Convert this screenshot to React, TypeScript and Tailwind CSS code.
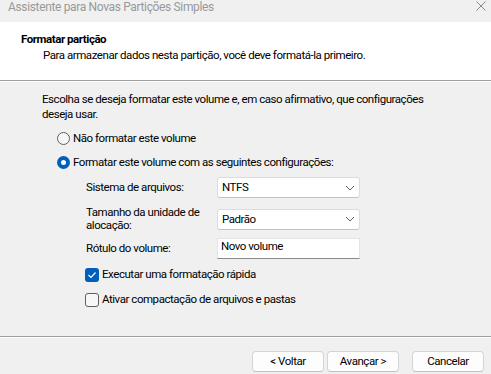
import type { ReactNode } from "react";

function Chevron() {
  return (
    <svg width="10" height="6" viewBox="0 0 10 6" className="mr-[4px]">
      <path d="M1 1 L5 5 L9 1" fill="none" stroke="#616161" strokeWidth="1" />
    </svg>
  );
}

function Combo({ value }: { value: string }) {
  return (
    <div className="flex h-[21px] w-[143px] items-center justify-between rounded-[3px] border border-[#dcdcdc] border-b-[#c4c4c4] bg-white pl-[4px]">
      <span>{value}</span>
      <Chevron />
    </div>
  );
}

function Radio({ checked, label }: { checked?: boolean; label: string }) {
  return (
    <div className="flex h-[24px] items-center pl-[15px]">
      {checked ? (
        <span className="flex h-[13px] w-[13px] items-center justify-center rounded-full bg-[#005fb8]">
          <span className="h-[5px] w-[5px] rounded-full bg-white" />
        </span>
      ) : (
        <span className="h-[13px] w-[13px] rounded-full border border-[#5f5f5f] bg-[#f7f7f7]" />
      )}
      <span className="ml-[3px]">{label}</span>
    </div>
  );
}

function Check({ checked, label }: { checked?: boolean; label: string }) {
  return (
    <div className="flex h-[25px] items-center">
      {checked ? (
        <span className="flex h-[14px] w-[14px] items-center justify-center rounded-[3px] bg-[#005fb8]">
          <svg width="10" height="8" viewBox="0 0 10 8">
            <path d="M1.5 4 L4 6.5 L8.5 1.5" fill="none" stroke="white" strokeWidth="1.2" />
          </svg>
        </span>
      ) : (
        <span className="h-[14px] w-[14px] rounded-[3px] border border-[#5f5f5f] bg-[#f7f7f7]" />
      )}
      <span className="ml-[3px]">{label}</span>
    </div>
  );
}

function Button({ children, className = "" }: { children: ReactNode; className?: string }) {
  return (
    <div
      className={`flex h-[21px] w-[72px] items-center justify-center rounded-[4px] border border-[#d4d4d4] border-b-[#c0c0c0] bg-[#fdfdfd] ${className}`}
    >
      {children}
    </div>
  );
}

export default function App() {
  return (
    <div className="flex h-[374px] w-[491px] flex-col overflow-hidden bg-[#f0f0f0] font-['Segoe_UI',Roboto,sans-serif] text-[11.5px] leading-[15px] tracking-[-0.45px] text-black">
      <div className="flex h-[22px] shrink-0 justify-between pl-[8px] pr-[5px]">
        <span className="text-[12px] leading-[14px] tracking-[-0.35px] text-[#999999]">
          Assistente para Novas Partições Simples
        </span>
        <svg width="10" height="10" viewBox="0 0 10 10" className="mt-[1px]">
          <path d="M0.5 0.5 L9.5 9.5 M9.5 0.5 L0.5 9.5" stroke="#8a8a8a" strokeWidth="1" />
        </svg>
      </div>

      <div className="h-[59px] shrink-0 border-b border-[#a0a0a0] bg-white pl-[21px] pt-[9px] leading-[16px]">
        <div className="font-bold">Formatar partição</div>
        <div className="pl-[22px]">Para armazenar dados nesta partição, você deve formatá-la primeiro.</div>
      </div>
      <div className="h-px shrink-0 bg-white" />

      <div className="flex-1 pl-[42px] pt-[10px]">
        <p>
          Escolha se deseja formatar este volume e, em caso afirmativo, que configurações
          <br />
          deseja usar.
        </p>

        <div className="mt-[4px]">
          <Radio label="Não formatar este volume" />
          <Radio checked label="Formatar este volume com as seguintes configurações:" />
        </div>

        <div className="mt-[3px] pl-[44px]">
          <div className="flex items-center">
            <span className="w-[131px]">Sistema de arquivos:</span>
            <Combo value="NTFS" />
          </div>
          <div className="mt-[8px] flex items-center">
            <span className="w-[131px] leading-[13px]">
              Tamanho da unidade de
              <br />
              alocação:
            </span>
            <Combo value="Padrão" />
          </div>
          <div className="mt-[6px] flex items-center">
            <span className="w-[131px]">Rótulo do volume:</span>
            <div className="h-[21px] w-[143px] border border-[#e3e3e3] border-b-[#8a8a8a] bg-white pl-[3px]">
              Novo volume
            </div>
          </div>
        </div>

        <div className="mt-[3px] pl-[43px]">
          <Check checked label="Executar uma formatação rápida" />
          <Check label="Ativar compactação de arquivos e pastas" />
        </div>
      </div>

      <div className="h-px shrink-0 bg-[#a0a0a0]" />
      <div className="h-px shrink-0 bg-white" />
      <div className="flex h-[36px] shrink-0 justify-end pr-[7px] pt-[13px]">
        <Button>&lt; Voltar</Button>
        <Button className="ml-[3px]">Avançar &gt;</Button>
        <Button className="ml-[13px]">Cancelar</Button>
      </div>
    </div>
  );
}
